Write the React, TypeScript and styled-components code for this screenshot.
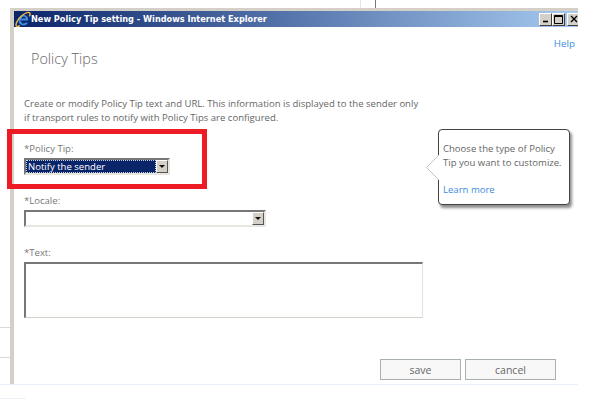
import { createGlobalStyle } from "styled-components";
import styled from "styled-components";

const GlobalStyle = createGlobalStyle`
  html, body {
    margin: 0;
    padding: 0;
    background: #fff;
  }
  body {
    width: 614px;
    height: 416px;
    overflow: hidden;
    font-family: "Open Sans", "Liberation Sans", sans-serif;
  }
`;

const Page = styled.div`
  position: relative;
  width: 614px;
  height: 416px;
  display: grid;
  grid-template-columns: 10px 568px 36px;
  grid-template-rows: 8px 376px 32px;
  background: #fff;
`;

const TopStrip = styled.div`
  grid-column: 2;
  grid-row: 1;
  display: flex;
  padding-left: 350px;
  gap: 14px;
`;

const Tick = styled.div<{ $color: string; $width: number }>`
  width: ${(p) => p.$width}px;
  background: ${(p) => p.$color};
`;

const LeftStrip = styled.div`
  grid-column: 1;
  grid-row: 2;
  padding-top: 319px;
  display: flex;
  flex-direction: column;
  gap: 29px;
`;

const Rule = styled.div`
  height: 1px;
  background: #d9d9d9;
`;

const BottomStrip = styled.div`
  grid-column: 1 / 3;
  grid-row: 3;
  border-top: 1px solid #e8eff9;
`;

const ShortRule = styled.div`
  width: 26px;
  height: 1px;
  margin-top: 13px;
  background: #eef3fa;
`;

const Window = styled.div`
  grid-column: 2;
  grid-row: 2;
  display: flex;
  flex-direction: column;
  border-top: 3px solid #d4d0c8;
  border-left: 4px solid #d4d0c8;
  overflow: hidden;
`;

const TitleBar = styled.div`
  height: 16px;
  flex: none;
  display: flex;
  align-items: center;
  background: linear-gradient(90deg, #0a246a 0%, #a6caf0 100%);
  padding-left: 1px;
`;

const TitleText = styled.span`
  margin-left: 0;
  font-family: "DejaVu Sans", sans-serif;
  font-weight: 700;
  font-size: 8.2px;
  color: #fff;
  white-space: nowrap;
  flex: 1;
`;

const WinButtons = styled.div`
  display: flex;
  margin-right: -2px;
`;

const WinButton = styled.div`
  width: 13px;
  height: 13px;
  background: #d4d0c8;
  border: 1px solid;
  border-color: #fff #404040 #404040 #fff;
  box-sizing: border-box;
  display: flex;
  align-items: center;
  justify-content: center;
  &:last-child {
    margin-left: 2px;
  }
`;

const Content = styled.div`
  flex: 1;
  display: flex;
  flex-direction: column;
  background: #fff;
  padding: 0 3px 4px 10px;
`;

const HelpRow = styled.div`
  display: flex;
  justify-content: flex-end;
  padding-top: 10px;
  height: 14px;
`;

const LinkText = styled.a`
  font-size: 9.8px;
  line-height: 14px;
  color: #3b8ddb;
`;

const Heading = styled.h1`
  margin: -3px 0 0 7px;
  font-size: 14.4px;
  line-height: 22px;
  font-weight: 300;
  color: #666;
`;

const Description = styled.p`
  margin: 27px 0 0;
  font-size: 9.55px;
  line-height: 14px;
  color: #666;
  white-space: nowrap;
`;

const Field = styled.div<{ $top: number }>`
  margin-top: ${(p) => p.$top}px;
  display: flex;
  flex-direction: column;
  gap: 2px;
`;

const Label = styled.label`
  font-size: 9.55px;
  line-height: 14px;
  color: #777;
`;

const Select = styled.div<{ $width: number }>`
  width: ${(p) => p.$width}px;
  height: 17px;
  box-sizing: border-box;
  display: flex;
  border: 2px solid;
  border-color: #777 #e8e6e0 #e8e6e0 #777;
  background: #fff;
`;

const SelectValue = styled.div<{ $selected?: boolean }>`
  flex: 1;
  font-size: 9.55px;
  line-height: 13px;
  padding-left: 2px;
  color: #fff;
  background: ${(p) => (p.$selected ? "#0a246a" : "#fff")};
  outline: ${(p) => (p.$selected ? "1px dotted #c9d0e0" : "none")};
  outline-offset: -1px;
`;

const SelectArrow = styled.div`
  width: 12px;
  background: #d4d0c8;
  border: 1px solid;
  border-color: #fff #555 #555 #fff;
  box-sizing: border-box;
  display: flex;
  align-items: center;
  justify-content: center;
  &::after {
    content: "";
    border-style: solid;
    border-width: 3px 3px 0;
    border-color: #111 transparent transparent;
  }
`;

const TextBox = styled.div`
  width: 399px;
  height: 56px;
  box-sizing: border-box;
  border: 1px solid;
  border-width: 2px 1px 1px 2px;
  border-color: #777 #e4e2dc #d4d0c8 #777;
`;

const Actions = styled.div`
  margin-top: auto;
  display: flex;
  gap: 4px;
  padding-left: 356px;
`;

const ActionButton = styled.button<{ $width: number }>`
  width: ${(p) => p.$width}px;
  height: 21px;
  padding: 0;
  border: 1px solid #a9b0b0;
  background: #f8f8f8;
  color: #666;
  font-family: inherit;
  font-size: 10.5px;
`;

const Frame = styled.div`
  position: absolute;
  left: 7px;
  top: 129px;
  width: 200px;
  height: 60px;
  box-sizing: border-box;
  border: 5px solid #ed1c24;
`;

const Callout = styled.div`
  position: absolute;
  left: 438px;
  top: 129px;
  width: 132px;
  height: 76px;
  box-sizing: border-box;
  padding: 12px 5px 0 4px;
  background: #fff;
  border: 1px solid #444;
  border-radius: 4px;
  box-shadow: 2px 3px 3px rgba(0, 0, 0, 0.45);
  font-size: 9.55px;
  line-height: 13.5px;
  color: #666;
  white-space: nowrap;
`;

const CalloutArrow = styled.svg`
  position: absolute;
  left: -13px;
  top: 25px;
`;

const CalloutLink = styled(LinkText)`
  display: block;
  margin-top: 13.5px;
  font-size: 9.55px;
  line-height: 13.5px;
`;

function IeLogo() {
  return (
    <svg width="16" height="16" viewBox="0 0 16 16" style={{ flex: "none" }}>
      <path
        d="M4.2 9.4h9c.3-3-1.7-5.4-4.5-5.4-3 0-5.2 2.3-5.2 5.3 0 2.9 2.1 5.1 5 5.1 2 0 3.6-1 4.4-2.7h-3c-.3.6-.8.9-1.5.9-1.2 0-2.1-1-2.2-2.2z M6.4 7.6c.2-1.2 1.1-2 2.2-2 1.2 0 2 .8 2.1 2z"
        fill="#3d8ee0"
        fillRule="evenodd"
      />
      <path
        d="M1.4 15c-1.4-1.7 1.4-7 5.4-10.2 3.2-2.6 6.8-4 8-2.8.7.8.4 2-.5 3.3"
        fill="none"
        stroke="#f0bd3e"
        strokeWidth="1.4"
      />
      <path d="M1.4 15c.7.6 2.2.4 3.6-.4" fill="none" stroke="#f0bd3e" strokeWidth="1.4" />
    </svg>
  );
}

export default function App() {
  return (
    <Page>
      <GlobalStyle />
      <TopStrip>
        <Tick $color="#e6e6e6" $width={1} />
        <Tick $color="#777" $width={1} />
      </TopStrip>
      <LeftStrip>
        <Rule />
        <Rule />
      </LeftStrip>
      <Window>
        <TitleBar>
          <IeLogo />
          <TitleText>New Policy Tip setting - Windows Internet Explorer</TitleText>
          <WinButtons>
            <WinButton>
              <svg width="8" height="8" viewBox="0 0 8 8">
                <path d="M1 6.5h5" stroke="#000" strokeWidth="1.6" />
              </svg>
            </WinButton>
            <WinButton>
              <svg width="9" height="9" viewBox="0 0 9 9">
                <path d="M.5.5h8v8h-8z M.5 1.5h8" fill="none" stroke="#000" />
              </svg>
            </WinButton>
            <WinButton>
              <svg width="8" height="8" viewBox="0 0 8 8">
                <path d="M1 1l6 6M7 1l-6 6" stroke="#000" strokeWidth="1.4" />
              </svg>
            </WinButton>
          </WinButtons>
        </TitleBar>
        <Content>
          <HelpRow>
            <LinkText>Help</LinkText>
          </HelpRow>
          <Heading>Policy Tips</Heading>
          <Description>
            Create or modify Policy Tip text and URL. This information is displayed to the sender only
            <br />
            if transport rules to notify with Policy Tips are configured.
          </Description>
          <Field $top={17}>
            <Label>*Policy Tip:</Label>
            <Select $width={146}>
              <SelectValue $selected>Notify the sender</SelectValue>
              <SelectArrow />
            </Select>
          </Field>
          <Field $top={19}>
            <Label>*Locale:</Label>
            <Select $width={242}>
              <SelectValue />
              <SelectArrow />
            </Select>
          </Field>
          <Field $top={19}>
            <Label>*Text:</Label>
            <TextBox />
          </Field>
          <Actions>
            <ActionButton $width={81}>save</ActionButton>
            <ActionButton $width={91}>cancel</ActionButton>
          </Actions>
        </Content>
      </Window>
      <BottomStrip>
        <ShortRule />
      </BottomStrip>
      <Frame />
      <Callout>
        <CalloutArrow width="13" height="26" viewBox="0 0 13 26">
          <path d="M13 0L.5 12.5 13 25z" fill="#fff" />
          <path d="M13 0L.5 12.5 13 25" fill="none" stroke="#c4c4c4" />
        </CalloutArrow>
        Choose the type of Policy
        <br />
        Tip you want to customize.
        <CalloutLink>Learn more</CalloutLink>
      </Callout>
    </Page>
  );
}
